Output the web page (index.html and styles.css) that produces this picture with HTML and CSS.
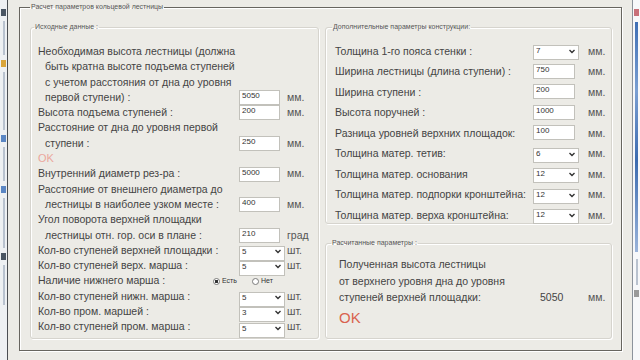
FILE: index.html
```html
<!DOCTYPE html>
<html>
<head>
    <title>Расчет параметров кольцевой лестницы</title>
    <meta charset="utf-8">
    <link rel="stylesheet" href="styles.css">
</head>
<body>
    <!-- left tool dock -->
    <div class="dock dock-left">
        <i class="ico ico-dark"></i>
        <i class="txt" style="height:34px"></i>
        <i class="ico ico-yellow"></i>
        <i class="txt" style="height:58px"></i>
        <i class="ico ico-blue"></i>
        <i class="txt" style="height:34px"></i>
        <i class="ico ico-blue"></i>
        <i class="txt" style="height:50px"></i>
        <i class="ico ico-dark"></i>
        <i class="txt" style="height:40px"></i>
    </div>

    <div class="main">
        <fieldset class="frame">
            <legend>Расчет параметров кольцевой лестницы</legend>
            <div class="columns">

                <fieldset class="group group-source">
                    <legend>Исходные данные :</legend>

                    <div class="row">
                        <div class="label">
                            <span>Необходимая высота лестницы (должна</span>
                            <span class="ind">быть кратна высоте подъема ступеней</span>
                            <span class="ind">с учетом расстояния от дна до уровня</span>
                            <span class="ind">первой ступени) :</span>
                        </div>
                        <input class="field" type="text" value="5050">
                        <span class="unit">мм.</span>
                    </div>
                    <div class="row">
                        <div class="label"><span>Высота подъема ступеней :</span></div>
                        <input class="field" type="text" value="200">
                        <span class="unit">мм.</span>
                    </div>
                    <div class="row">
                        <div class="label">
                            <span>Расстояние от дна до уровня первой</span>
                            <span class="ind">ступени :</span>
                        </div>
                        <input class="field" type="text" value="250">
                        <span class="unit">мм.</span>
                    </div>
                    <div class="ok-hint">OK</div>
                    <div class="row">
                        <div class="label"><span>Внутренний диаметр рез-ра :</span></div>
                        <input class="field" type="text" value="5000">
                        <span class="unit">мм.</span>
                    </div>
                    <div class="row">
                        <div class="label">
                            <span>Расстояние от внешнего диаметра до</span>
                            <span class="ind">лестницы в наиболее узком месте :</span>
                        </div>
                        <input class="field" type="text" value="400">
                        <span class="unit">мм.</span>
                    </div>
                    <div class="row">
                        <div class="label">
                            <span>Угол поворота верхней площадки</span>
                            <span class="ind">лестницы отн. гор. оси в плане :</span>
                        </div>
                        <input class="field" type="text" value="210">
                        <span class="unit">град</span>
                    </div>
                    <div class="row">
                        <div class="label"><span>Кол-во ступеней верхней площадки :</span></div>
                        <span class="combo">
                            <select><option>5</option></select>
                            <svg width="6" height="5" viewBox="0 0 6 5"><path d="M0.5 1 L3 3.5 L5.5 1" fill="none" stroke="#333" stroke-width="1.4"/></svg>
                        </span>
                        <span class="unit">шт.</span>
                    </div>
                    <div class="row">
                        <div class="label"><span>Кол-во ступеней верх. марша :</span></div>
                        <span class="combo">
                            <select><option>5</option></select>
                            <svg width="6" height="5" viewBox="0 0 6 5"><path d="M0.5 1 L3 3.5 L5.5 1" fill="none" stroke="#333" stroke-width="1.4"/></svg>
                        </span>
                        <span class="unit">шт.</span>
                    </div>
                    <div class="row row-radio">
                        <div class="label"><span>Наличие нижнего марша :</span></div>
                        <label class="choice"><input type="radio" name="lower" checked>Есть</label>
                        <label class="choice"><input type="radio" name="lower">Нет</label>
                    </div>
                    <div class="row">
                        <div class="label"><span>Кол-во ступеней нижн. марша :</span></div>
                        <span class="combo">
                            <select><option>5</option></select>
                            <svg width="6" height="5" viewBox="0 0 6 5"><path d="M0.5 1 L3 3.5 L5.5 1" fill="none" stroke="#333" stroke-width="1.4"/></svg>
                        </span>
                        <span class="unit">шт.</span>
                    </div>
                    <div class="row">
                        <div class="label"><span>Кол-во пром. маршей :</span></div>
                        <span class="combo">
                            <select><option>3</option></select>
                            <svg width="6" height="5" viewBox="0 0 6 5"><path d="M0.5 1 L3 3.5 L5.5 1" fill="none" stroke="#333" stroke-width="1.4"/></svg>
                        </span>
                        <span class="unit">шт.</span>
                    </div>
                    <div class="row">
                        <div class="label"><span>Кол-во ступеней пром. марша :</span></div>
                        <span class="combo">
                            <select><option>5</option></select>
                            <svg width="6" height="5" viewBox="0 0 6 5"><path d="M0.5 1 L3 3.5 L5.5 1" fill="none" stroke="#333" stroke-width="1.4"/></svg>
                        </span>
                        <span class="unit">шт.</span>
                    </div>
                </fieldset>

                <div class="col-right">
                    <fieldset class="group group-extra">
                        <legend>Дополнительные параметры конструкции:</legend>

                        <div class="xrow">
                            <span>Толщина 1-го пояса стенки :</span>
                            <span class="combo">
                                <select><option>7</option></select>
                                <svg width="6" height="5" viewBox="0 0 6 5"><path d="M0.5 1 L3 3.5 L5.5 1" fill="none" stroke="#333" stroke-width="1.4"/></svg>
                            </span>
                            <span class="unit">мм.</span>
                        </div>
                        <div class="xrow">
                            <span>Ширина лестницы (длина ступени) :</span>
                            <input class="field field-wide" type="text" value="750">
                            <span class="unit">мм.</span>
                        </div>
                        <div class="xrow">
                            <span>Ширина ступени :</span>
                            <input class="field field-wide" type="text" value="200">
                            <span class="unit">мм.</span>
                        </div>
                        <div class="xrow">
                            <span>Высота поручней :</span>
                            <input class="field field-wide" type="text" value="1000">
                            <span class="unit">мм.</span>
                        </div>
                        <div class="xrow">
                            <span>Разница уровней верхних площадок:</span>
                            <input class="field field-wide" type="text" value="100">
                            <span class="unit">мм.</span>
                        </div>
                        <div class="xrow">
                            <span>Толщина матер. тетив:</span>
                            <span class="combo">
                                <select><option>6</option></select>
                                <svg width="6" height="5" viewBox="0 0 6 5"><path d="M0.5 1 L3 3.5 L5.5 1" fill="none" stroke="#333" stroke-width="1.4"/></svg>
                            </span>
                            <span class="unit">мм.</span>
                        </div>
                        <div class="xrow">
                            <span>Толщина матер. основания</span>
                            <span class="combo">
                                <select><option>12</option></select>
                                <svg width="6" height="5" viewBox="0 0 6 5"><path d="M0.5 1 L3 3.5 L5.5 1" fill="none" stroke="#333" stroke-width="1.4"/></svg>
                            </span>
                            <span class="unit">мм.</span>
                        </div>
                        <div class="xrow">
                            <span>Толщина матер. подпорки кронштейна:</span>
                            <span class="combo">
                                <select><option>12</option></select>
                                <svg width="6" height="5" viewBox="0 0 6 5"><path d="M0.5 1 L3 3.5 L5.5 1" fill="none" stroke="#333" stroke-width="1.4"/></svg>
                            </span>
                            <span class="unit">мм.</span>
                        </div>
                        <div class="xrow">
                            <span>Толщина матер. верха кронштейна:</span>
                            <span class="combo">
                                <select><option>12</option></select>
                                <svg width="6" height="5" viewBox="0 0 6 5"><path d="M0.5 1 L3 3.5 L5.5 1" fill="none" stroke="#333" stroke-width="1.4"/></svg>
                            </span>
                            <span class="unit">мм.</span>
                        </div>
                    </fieldset>

                    <fieldset class="group group-result">
                        <legend>Расчитанные параметры :</legend>
                        <div class="res-line">Полученная высота лестницы</div>
                        <div class="res-line">от верхнего уровня дна до уровня</div>
                        <div class="res-line res-row">
                            <span>ступеней верхней площадки:</span>
                            <span>5050</span>
                            <span class="unit">мм.</span>
                        </div>
                        <div class="ok-big">OK</div>
                    </fieldset>
                </div>

            </div>
        </fieldset>
    </div>

    <!-- right tool dock -->
    <div class="dock dock-right">
        <i class="ico ico-pink"></i>
        <i class="bar" style="height:230px"></i>
        <i class="txt" style="height:26px"></i>
        <i class="ico ico-grey"></i>
    </div>
</body>
</html>
```

FILE: styles.css
```css
/* Reset some default styles to start fresh */
body, fieldset, legend, input, select {
    margin: 0;
    padding: 0;
}

body {
    display: flex;
    width: 640px;
    height: 360px;
    overflow: hidden;
    background-color: #ecebe6;
    font-family: "Liberation Sans", Arial, sans-serif;
    color: #444;
}

/* side docks of the host window */
.dock {
    flex: none;
    width: 7px;
    display: flex;
    flex-direction: column;
    align-items: center;
    padding-top: 7px;
    background-color: #eef0f3;
}

.dock-left {
    border-right: 1px solid #4b4e53;
}

.dock-right {
    border-left: 1px solid #8c939c;
    background-color: #f7f8fa;
}

.dock i {
    display: block;
    flex: none;
}

.ico {
    width: 5px;
    height: 7px;
    margin: 2px 0;
}

.ico-dark { background-color: #4a5563; }
.ico-yellow { background-color: #d9a43a; }
.ico-blue { background-color: #5b86c4; }
.ico-pink { background-color: #c8707a; }
.ico-grey { background-color: #9a9a9a; }

.txt {
    width: 2px;
    margin: 3px 0;
    background-color: #b9c2cf;
}

.bar {
    width: 3px;
    margin: 4px 0;
    background: linear-gradient(#3f6fb5, #7b9fd2 30%, #3c6bb0 60%, #9bb4da);
}

.main {
    flex: 1;
    display: flex;
    flex-direction: column;
    padding: 3px 10px 9px 11px;
}

/* outer group box */
.frame {
    flex: 1;
    display: flex;
    flex-direction: column;
    min-width: 0;
    padding: 12px 9px 11px 10px;
    border: 1px solid #67655f;
    box-shadow: inset 1px 1px 0 #fff, 1px 1px 0 #fff;
}

legend {
    padding: 0 1px;
    font-size: 7px;
    line-height: 8px;
    color: #555;
}

.columns {
    flex: 1;
    display: grid;
    grid-template-columns: 289px 287px;
    column-gap: 6px;
}

.group {
    min-width: 0;
    border: 1px solid #d6d4ce;
    border-radius: 3px;
    box-shadow: inset 1px 1px 0 #fff, 1px 1px 0 #fff;
}

/* left: source data */
.group-source {
    padding: 13px 4px 3px 7px;
}

.group-source legend {
    margin-left: -4px;
}

.row {
    display: grid;
    grid-template-columns: 201px 48px auto;
    align-items: end;
    font-size: 10.5px;
    line-height: 15.3px;
}

.label span {
    display: block;
    white-space: nowrap;
}

.label .ind {
    padding-left: 7px;
}

.unit {
    color: #555;
}

.field {
    box-sizing: border-box;
    width: 41px;
    height: 15px;
    padding: 0 2px 4px;
    border: 1px solid #c2c1bb;
    background-color: #fff;
    font: 8px "Liberation Sans", Arial, sans-serif;
    color: #333;
}

.field-wide {
    width: 42px;
}

.combo {
    position: relative;
    display: block;
    width: 46px;
    height: 15px;
}

.combo select {
    appearance: none;
    box-sizing: border-box;
    width: 100%;
    height: 100%;
    padding: 0 0 4px 2px;
    border: 1px solid #c2c1bb;
    border-radius: 0;
    background-color: #fff;
    font: 8px "Liberation Sans", Arial, sans-serif;
    color: #333;
}

.combo svg {
    position: absolute;
    right: 4px;
    top: 6px;
}

.ok-hint {
    font-size: 11px;
    line-height: 15.3px;
    color: #eba79d;
}

.row-radio {
    display: flex;
    align-items: center;
}

.row-radio .label {
    width: 175px;
}

.choice {
    display: flex;
    align-items: center;
    gap: 2px;
    margin-right: 15px;
    font-size: 7px;
    color: #333;
}

.choice input {
    appearance: none;
    width: 7px;
    height: 7px;
    border: 1px solid #7b7b7b;
    border-radius: 50%;
    background-color: #fff;
}

.choice input:checked {
    background: radial-gradient(circle, #333 0 1.4px, #fff 2px);
}

/* right column */
.col-right {
    display: flex;
    flex-direction: column;
}

.group-extra {
    padding: 12px 2px 1px 9px;
}

.group-extra legend {
    margin-left: -3px;
}

.xrow {
    display: grid;
    grid-template-columns: 198px 55px auto;
    align-items: center;
    height: 15px;
    margin-bottom: 5.5px;
    font-size: 10.5px;
    white-space: nowrap;
}

.xrow:last-child {
    margin-bottom: 0;
}

.group-result {
    flex: 1;
    margin-top: 15px;
    padding: 9px 4px 0 13px;
}

.group-result legend {
    margin-left: -8px;
}

.res-line {
    font-size: 10.5px;
    line-height: 16.5px;
    white-space: nowrap;
}

.res-row {
    display: grid;
    grid-template-columns: 201px 48px auto;
}

.ok-big {
    margin-top: 2px;
    font-size: 15px;
    line-height: 20px;
    color: #d9634f;
}
```
